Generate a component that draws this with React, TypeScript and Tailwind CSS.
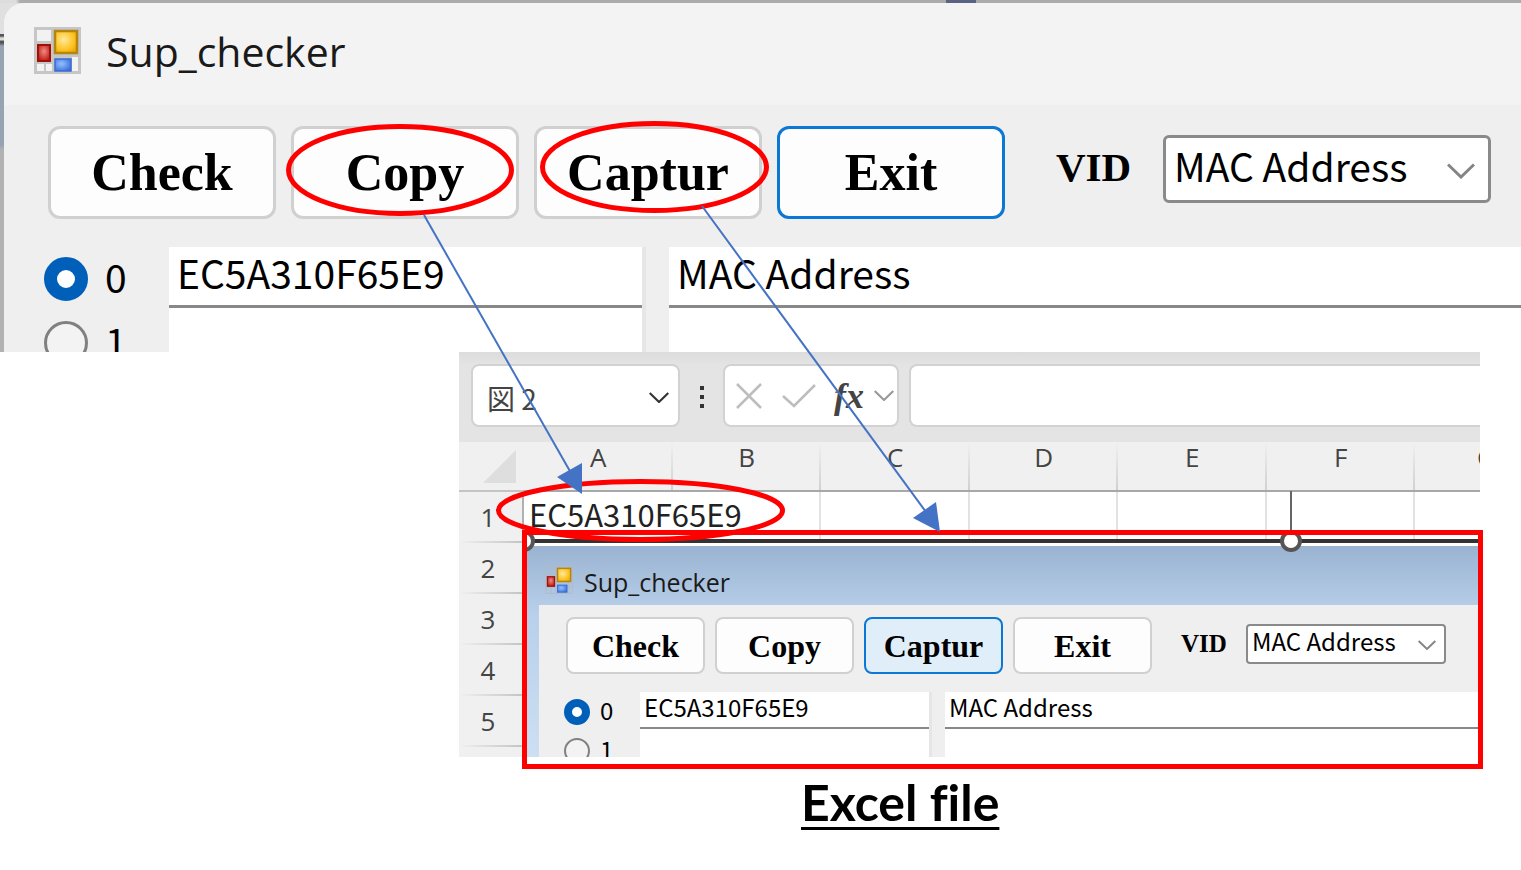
import clsx from "clsx";

const actions = ["Check", "Copy", "Captur", "Exit"];
const columns = ["A", "B", "C", "D", "E", "F"];
const rows = [1, 2, 3, 4, 5];

function FormIcon({ className, framed }: { className: string; framed: boolean }) {
  return (
    <svg viewBox="0 0 47 47" className={className} aria-hidden="true">
      <defs>
        <radialGradient id="gold" cx="0.4" cy="0.4" r="0.8">
          <stop offset="0" stopColor="#ffe9a0" />
          <stop offset="0.6" stopColor="#fcc21d" />
          <stop offset="1" stopColor="#e0a000" />
        </radialGradient>
        <radialGradient id="ruby" cx="0.5" cy="0.4" r="0.7">
          <stop offset="0" stopColor="#f08a80" />
          <stop offset="1" stopColor="#b80d08" />
        </radialGradient>
        <radialGradient id="azure" cx="0.4" cy="0.4" r="0.8">
          <stop offset="0" stopColor="#94c0ff" />
          <stop offset="1" stopColor="#2a62d6" />
        </radialGradient>
      </defs>
      {framed ? (
        <>
          <rect width="47" height="47" fill="#c6c6c6" />
          <rect x="3" y="3" width="14" height="11" fill="#f2f2f2" />
          <rect x="3" y="37" width="7" height="7" fill="#f2f2f2" />
          <rect x="12" y="37" width="6" height="7" fill="#f2f2f2" />
          <rect x="38" y="30" width="6" height="14" fill="#f2f2f2" />
        </>
      ) : (
        <path d="M1 1h45v45H1zM1 15h45M18 1v45M1 36h45M10 36v10M40 28v18" fill="none" stroke="#b3bac6" strokeWidth="1.5" />
      )}
      <rect x="4" y="18" width="12" height="16" fill="url(#ruby)" stroke="#a01008" strokeWidth="2" />
      <rect x="21" y="4" width="22" height="22" fill="url(#gold)" stroke="#b58510" strokeWidth="2.5" />
      <rect x="21" y="32" width="16" height="12" fill="url(#azure)" stroke="#3c6cd0" strokeWidth="1.5" />
    </svg>
  );
}

function Chevron({ className }: { className: string }) {
  return (
    <svg viewBox="0 0 28 16" className={className} fill="none" stroke="currentColor" strokeWidth="3" aria-hidden="true">
      <path d="M1 1.5 14 14 27 1.5" />
    </svg>
  );
}

type CheckerProps = { id: string; large?: boolean; active: string };

function CheckerWindow({ id, large = false, active }: CheckerProps) {
  const fieldText = large ? "text-[39px]" : "text-[24px]";
  const input = clsx(
    "block w-full bg-white border-[#888] text-black outline-none",
    fieldText,
    large ? "h-[61px] border-b-3 px-2 pb-2" : "h-[37px] border-b-2 px-1 pb-[6px]"
  );

  return (
    <div
      className={clsx(
        "font-['Noto_Sans_CJK_JP',sans-serif] text-black",
        large ? "bg-[#f3f3f3] rounded-tl-[20px]" : "bg-linear-to-b from-[#9ab3d1] via-[#b8d0ea] via-30% to-[#cfe0f3] pl-3"
      )}
    >
      <header className={clsx("flex items-center", large ? "h-[102px] pl-[30px] pb-2 gap-[25px]" : "h-[59px] pl-[6px] gap-[11px]")}>
        <FormIcon framed={large} className={large ? "size-[47px]" : "size-7 mt-2"} />
        <h2 className={clsx("font-['Open_Sans',sans-serif] text-[#1a1a1a]", large ? "text-[41px] leading-[48px] pt-[2px]" : "text-[25px] leading-8 pt-3")}>
          Sup_checker
        </h2>
      </header>

      <div className="bg-[#efefef]">
        <div className={clsx("flex items-start", large ? "pt-[21px] pl-[44px]" : "pt-3 pl-[27px]")}>
          <div className={clsx("flex shrink-0", large ? "gap-[15px]" : "gap-[10px]")}>
            {actions.map((name) => (
              <button
                key={name}
                type="button"
                className={clsx(
                  "font-['Liberation_Serif',serif] font-bold",
                  large ? "w-[228px] h-[93px] rounded-xl border-3 text-[52px]" : "w-[139px] h-[57px] rounded-lg border-2 text-[32px]",
                  name === active ? "border-[#0a78d4]" : "border-[#d0d0d0]",
                  name === active && !large ? "bg-[#e0eef9]" : "bg-[#fdfdfd]"
                )}
              >
                {name}
              </button>
            ))}
          </div>
          <label
            htmlFor={`${id}-kind`}
            className={clsx(
              "font-['Liberation_Serif',serif] font-bold shrink-0",
              large ? "ml-[51px] w-[107px] text-[41px] leading-[82px]" : "ml-[29px] w-[65px] text-[25px] leading-[54px]"
            )}
          >
            VID
          </label>
          <div className={clsx("relative shrink-0", large ? "mt-[9px] w-[328px]" : "mt-[7px] w-[200px]")}>
            <select
              id={`${id}-kind`}
              className={clsx(
                "block w-full appearance-none bg-white border-[#8a8a8a]",
                fieldText,
                large ? "h-[68px] rounded-md border-3 pl-2 pb-2 leading-10" : "h-10 rounded border-2 pl-1 pb-[6px] leading-6"
              )}
            >
              <option>MAC Address</option>
            </select>
            <Chevron
              className={clsx(
                "absolute pointer-events-none text-[#858585]",
                large ? "right-4 top-7 w-7" : "right-[10px] top-4 w-[18px]"
              )}
            />
          </div>
        </div>

        <div className={clsx("flex", large ? "pt-7" : "pt-[18px]")}>
          <div className={clsx("shrink-0", fieldText, large ? "w-[165px] pl-[40px]" : "w-[101px] pl-[25px]")}>
            {["0", "1"].map((n) => (
              <label key={n} className={clsx("flex items-center", large ? "h-16 gap-[17px]" : "h-[39px] gap-[10px]")}>
                <input
                  type="radio"
                  name={`${id}-row`}
                  defaultChecked={n === "0"}
                  className={clsx(
                    "appearance-none rounded-full bg-white border-[#808080] checked:border-[#005fb8] not-checked:bg-[#f3f3f3]",
                    large ? "size-11 border-3 checked:border-[13px]" : "size-[26px] border-2 checked:border-8"
                  )}
                />
                <span className={large ? "pb-[6px]" : "pb-1"}>{n}</span>
              </label>
            ))}
          </div>
          <div className={clsx("shrink-0 bg-white border-[#e6e6e6]", large ? "w-[477px] border-r-4 mr-[23px]" : "w-[292px] border-r-3 mr-[13px]")}>
            <input aria-label="Value 0" className={input} defaultValue="EC5A310F65E9" />
            <input aria-label="Value 1" className={input} />
          </div>
          <div className="flex-1 min-w-0 bg-white">
            <input aria-label="Name 0" className={input} defaultValue="MAC Address" />
            <input aria-label="Name 1" className={input} />
          </div>
        </div>
      </div>
    </div>
  );
}

function FormulaBar() {
  const box = "flex items-center h-[63px] bg-white border-2 border-[#d2d2d2] rounded-lg";
  return (
    <div className="flex h-[90px] pt-3 pl-3 bg-linear-to-b from-[#dcdcdc] to-[#e4e4e4] to-15%">
      <div className={clsx(box, "w-[209px] shrink-0 pl-[14px] pr-[9px]")}>
        <input
          aria-label="Name box"
          defaultValue="図 2"
          className="flex-1 min-w-0 pt-1 text-[28px] font-['Noto_Sans_CJK_JP',sans-serif] text-[#444] outline-none"
        />
        <Chevron className="w-5 mt-1 text-[#333]" />
      </div>
      <div className="flex flex-col justify-center gap-[5px] w-[43px] h-[66px] shrink-0 items-center">
        <i className="size-1 bg-[#333]" />
        <i className="size-1 bg-[#333]" />
        <i className="size-1 bg-[#333]" />
      </div>
      <div className={clsx(box, "w-44 shrink-0 pl-[11px]")}>
        <button type="button" aria-label="Cancel">
          <svg viewBox="0 0 26 26" className="w-[26px]" fill="none" stroke="#bdbdbd" strokeWidth="2.5">
            <path d="M1 1 25 25M25 1 1 25" />
          </svg>
        </button>
        <button type="button" aria-label="Enter" className="ml-5">
          <svg viewBox="0 0 34 24" className="w-[34px]" fill="none" stroke="#bdbdbd" strokeWidth="2.5">
            <path d="M1 12 12 22 33 1" />
          </svg>
        </button>
        <button type="button" className="ml-[18px] w-7 font-['Liberation_Serif',serif] italic font-bold text-[36px] leading-10 text-[#444]">
          fx
        </button>
        <Chevron className="w-5 ml-3 text-[#999]" />
      </div>
      <input aria-label="Formula" className="flex-1 min-w-0 ml-[10px] h-[63px] bg-white border-2 border-r-0 border-[#d2d2d2] rounded-l-lg outline-none" />
    </div>
  );
}

function Sheet() {
  const colHead =
    "p-0 align-top font-normal leading-[30px] bg-[#f0f0f0] border-b-2 border-[#a8a8a8]";
  const colEdge =
    "bg-[linear-gradient(to_bottom,transparent,#d0d0d0)] bg-[length:2px_100%] bg-right bg-no-repeat";
  return (
    <table className="w-full table-fixed border-separate border-spacing-0 font-['Open_Sans',sans-serif] text-[26px] text-[#444]">
      <thead>
        <tr className="h-[50px]">
          <th className="w-[65px] p-0 bg-[#f0f0f0] border-b-2 border-[#c4c4c4]">
            <svg viewBox="0 0 33 33" className="w-[33px] ml-6" aria-hidden="true">
              <path d="M33 0V33H0Z" fill="#dedede" />
            </svg>
          </th>
          {columns.map((c) => (
            <th key={c} className={clsx(colHead, colEdge)}>
              {c}
            </th>
          ))}
          <th className={clsx(colHead, "w-[65px] text-left")}>
            <span className="ml-[62px]">G</span>
          </th>
        </tr>
      </thead>
      <tbody>
        {rows.map((r) => (
          <tr key={r} className="h-[51px]">
            <th className="p-0 pr-[5px] font-normal leading-[51px] bg-[#f0f0f0] bg-[linear-gradient(to_right,transparent,#c4c4c4)] bg-[length:100%_2px] bg-bottom bg-no-repeat border-r-2 border-[#b0b0b0]">
              {r}
            </th>
            {columns.map((c) => (
              <td key={c} className={clsx("p-0 align-top border-b-2 border-[#e2e2e2]", c === "A" && r === 1 ? "border-r-0" : "border-r-2")}>
                {c === "A" && r === 1 && (
                  <span className="block w-0 pl-[5px] whitespace-nowrap text-[31px] leading-[44px] font-['Noto_Sans_CJK_JP',sans-serif] text-[#222]">
                    EC5A310F65E9
                  </span>
                )}
              </td>
            ))}
            <td className="border-b-2 border-[#e2e2e2]" />
          </tr>
        ))}
      </tbody>
    </table>
  );
}

function ExcelView() {
  const handle = "absolute size-[22px] rounded-full border-4 border-[#555] bg-white";
  return (
    <section className="relative ml-[459px] mr-[41px]">
      <div className="relative h-[405px] overflow-hidden bg-[#f0f0f0]">
        <FormulaBar />
        <div className="bg-white">
          <Sheet />
        </div>
        {/* pasted capture, selected on the sheet */}
        <div className="absolute left-[68px] right-0 top-[187px] border-t-4 border-[#333]">
          <div className="border-t-3 border-white">
            <CheckerWindow id="pasted" active="Captur" />
          </div>
        </div>
        <i className="absolute left-[831px] top-[139px] w-[2px] h-[41px] bg-[#666]" />
        <i className={clsx(handle, "left-[821px] top-[178px]")} />
        <div className="absolute left-[68px] top-[178px] w-3 h-6 overflow-hidden">
          <i className={clsx(handle, "-left-[14px] top-0")} />
        </div>
      </div>
      <div className="absolute left-[63px] -right-[3px] top-[178px] h-[239px] border-5 border-[#f00] pointer-events-none" />
    </section>
  );
}

function Annotations() {
  return (
    <svg width="1521" height="870" className="absolute left-0 top-0 pointer-events-none" aria-hidden="true">
      <g fill="none" stroke="#f00" strokeWidth="5">
        <ellipse cx="400" cy="170" rx="111.5" ry="43.5" />
        <ellipse cx="654.5" cy="167" rx="112" ry="43.5" />
        <ellipse cx="640.5" cy="510.5" rx="142" ry="29" />
      </g>
      <g stroke="#4472c4" strokeWidth="2">
        <path d="M424 215 571 473" />
        <path d="M702 206 926 512" />
      </g>
      <g fill="#4472c4">
        <path d="M582 494 557 477 582 463Z" />
        <path d="M940 532 913 518 936 502Z" />
      </g>
    </svg>
  );
}

export default function App() {
  return (
    <main className="relative min-h-screen overflow-hidden bg-white">
      {/* desktop showing round the window's edge */}
      <section className="h-[352px] overflow-hidden pl-1 pt-[3px] bg-no-repeat bg-[linear-gradient(to_right,#dcdcdc_0_16px,#ababab_20px_946px,#5b6383_946px_976px,#ababab_976px),linear-gradient(to_bottom,#e0e0e0_0_34px,#555_34px_36px,#ddd_38px_40px,#555_41px_43px,#97a3b1_46px_145px,#b2b2b2_150px)] bg-[length:100%_3px,100%_100%]">
        <CheckerWindow id="main" large active="Exit" />
      </section>
      <ExcelView />
      <p className="ml-[801px] mt-4 font-[Lato,sans-serif] font-bold text-[50px] leading-[58px] text-black underline decoration-3 underline-offset-[6px] [font-variant-ligatures:none]">
        Excel file
      </p>
      <Annotations />
    </main>
  );
}
